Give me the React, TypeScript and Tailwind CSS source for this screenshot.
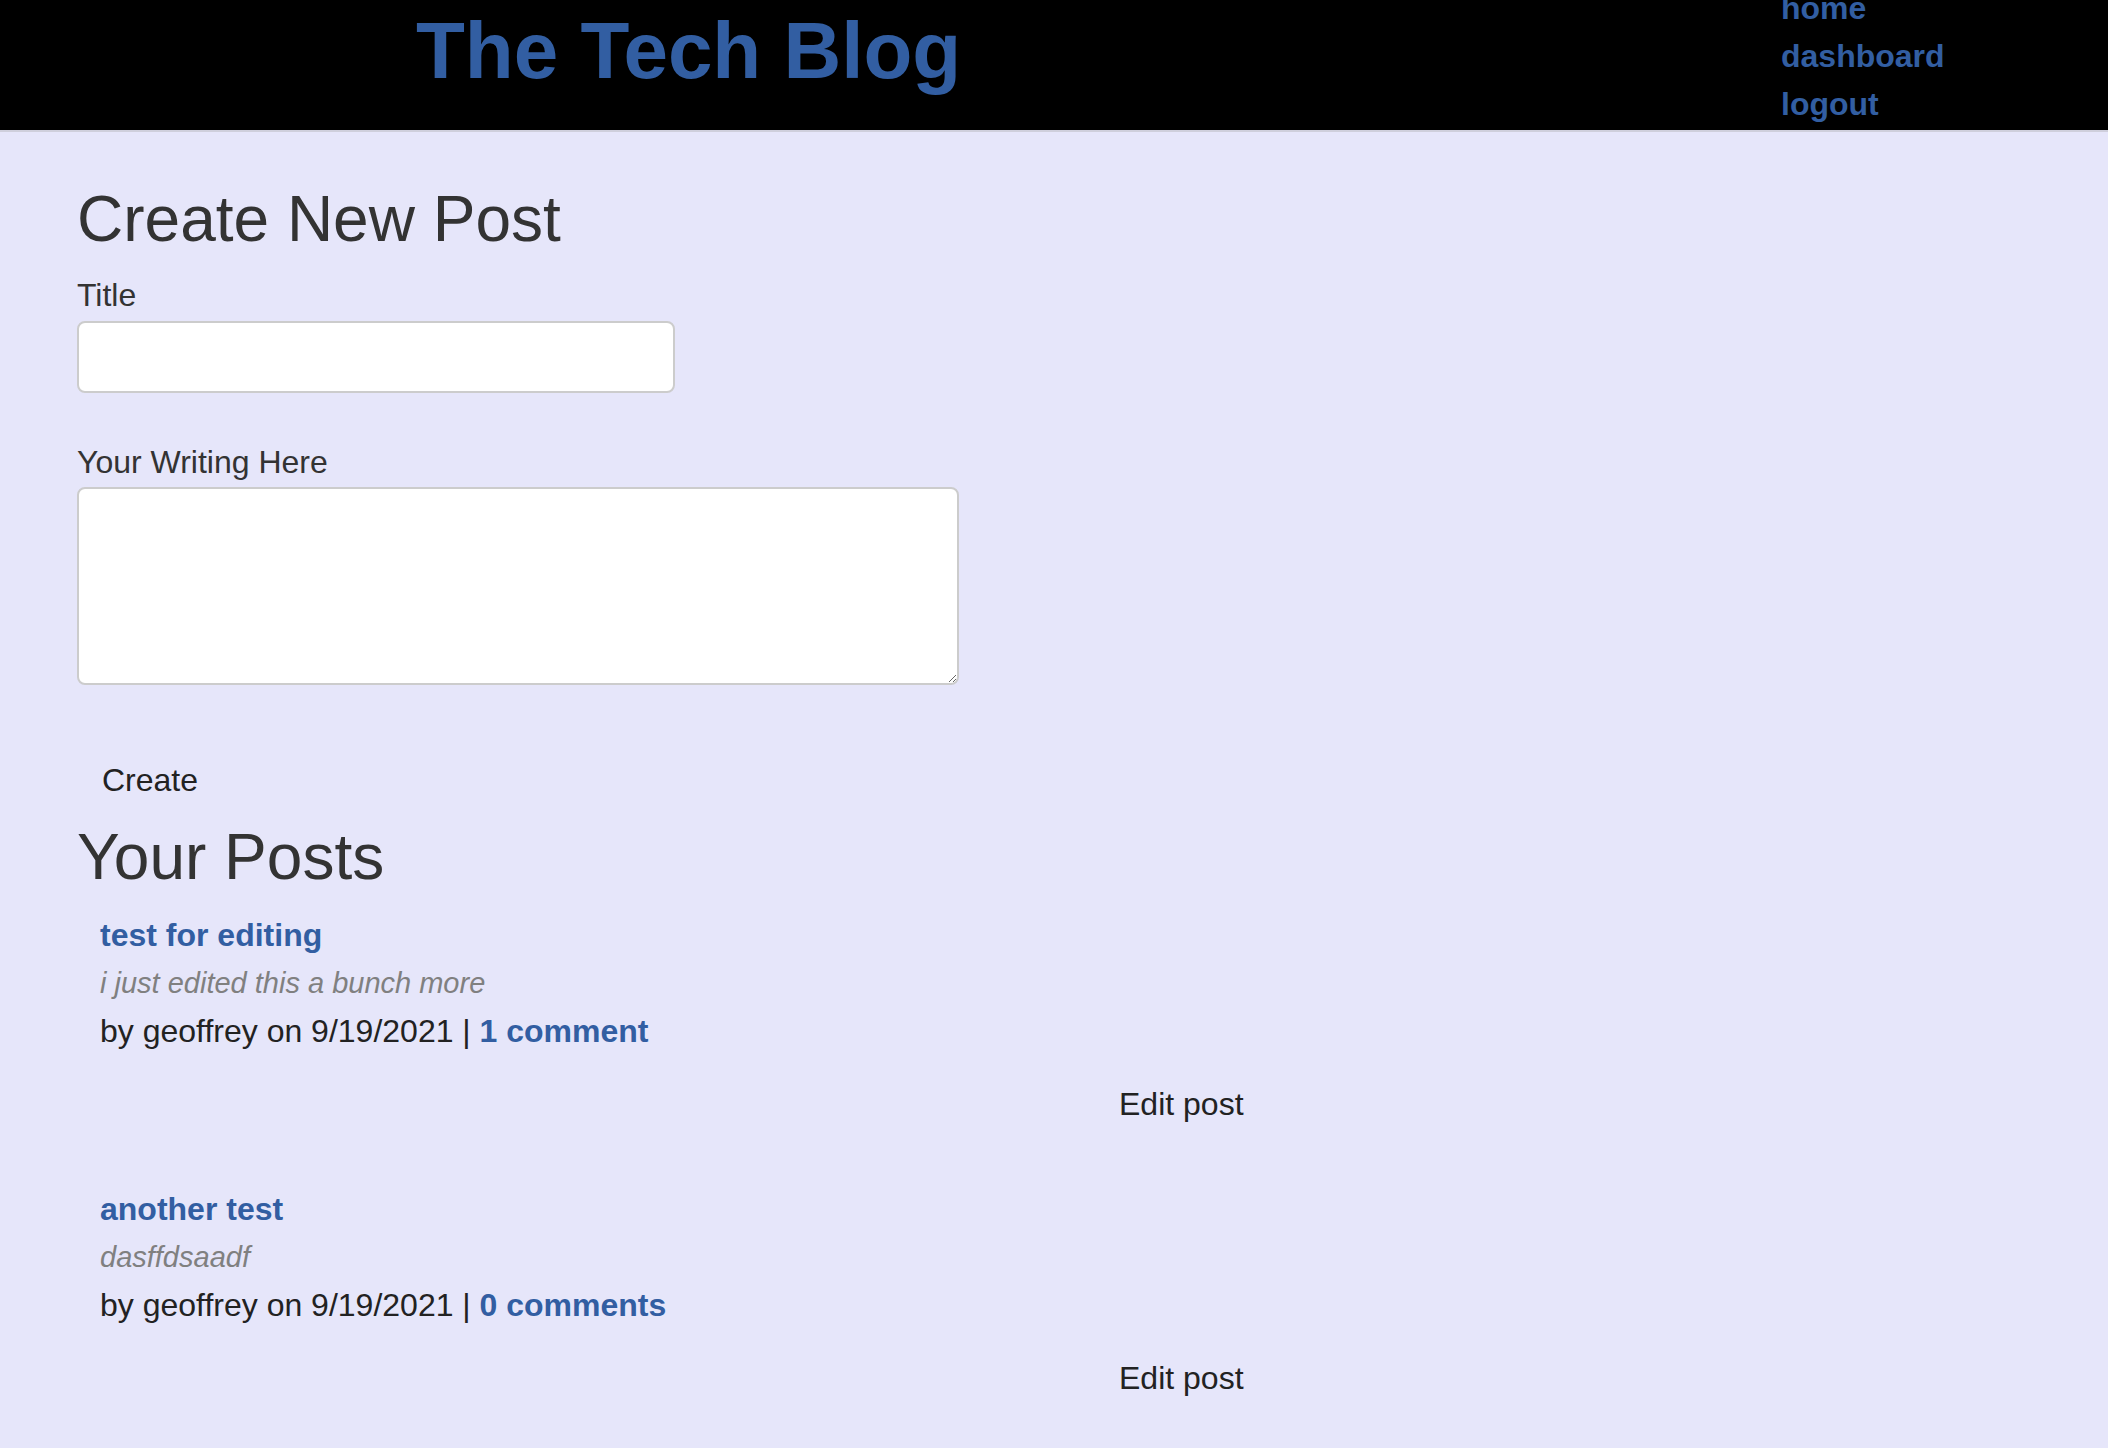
import React from "react";

const posts = [
  { title: "test for editing", body: "i just edited this a bunch more", author: "geoffrey", date: "9/19/2021", comments: "1 comment" },
  { title: "another test", body: "dasffdsaadf", author: "geoffrey", date: "9/19/2021", comments: "0 comments" },
];

export default function App() {
  return (
    <div className="min-h-[1448px] bg-[#e6e6fa] text-[#222] font-['Liberation_Sans',Arial,Helvetica,sans-serif]">
      <header className="h-[132px] bg-black border-b-[2px] border-[#cfcfdc] flex justify-between overflow-hidden">
        <h1 className="ml-[416px] mt-[11px] text-[80px] leading-[80px] font-bold text-[#325ea2]">The Tech Blog</h1>
        <nav className="w-[327px] mt-[-16px] flex flex-col text-[32px] leading-[48px] font-bold text-[#325ea2]">
          <a href="#">home</a>
          <a href="#">dashboard</a>
          <a href="#">logout</a>
        </nav>
      </header>
      <main className="pl-[77px]">
        <h2 className="mt-[50px] text-[64px] leading-[74px] text-[#333]">Create New Post</h2>
        <form className="flex flex-col items-start">
          <label className="mt-[15px] text-[32px] leading-[48px] text-[#333]">Title</label>
          <input className="mt-[2px] w-[598px] h-[72px] bg-white border-[2px] border-[#cccccc] rounded-[8px] outline-none" />
          <label className="mt-[45px] text-[32px] leading-[48px] text-[#333]">Your Writing Here</label>
          <textarea className="mt-[1px] w-[882px] h-[198px] bg-white border-[2px] border-[#cccccc] rounded-[8px] outline-none" />
          <button type="button" className="mt-[71px] pl-[25px] text-[32px] leading-[48px] text-[#222] bg-transparent">Create</button>
        </form>
        <h2 className="mt-[16px] text-[64px] leading-[74px] text-[#333]">Your Posts</h2>
        <div className="mt-[17px] flex flex-col gap-[57px] pl-[23px]">
          {posts.map((p) => (
            <div key={p.title} className="flex flex-col text-[32px] leading-[48px]">
              <a href="#" className="font-bold text-[#325ea2]">{p.title}</a>
              <p className="italic text-[29px] text-[#808080]">{p.body}</p>
              <p className="text-[#222]">
                by {p.author} on {p.date} | <a href="#" className="font-bold text-[#325ea2]">{p.comments}</a>
              </p>
              <div className="mt-[25px] pl-[1019px]">
                <button type="button" className="text-[#222] bg-transparent">Edit post</button>
              </div>
            </div>
          ))}
        </div>
      </main>
    </div>
  );
}
